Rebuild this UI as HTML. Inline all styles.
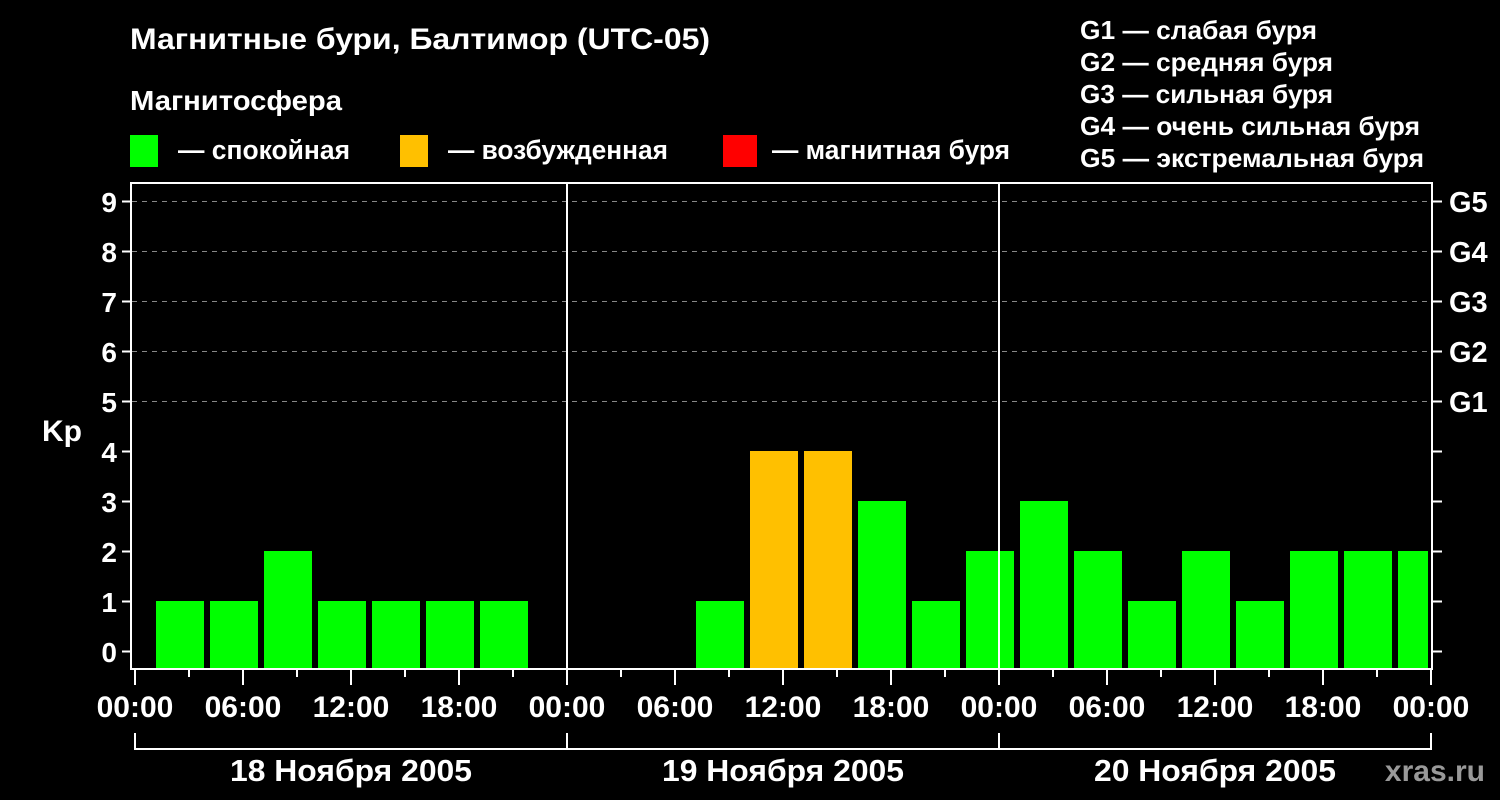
<!DOCTYPE html>
<html><head><meta charset="utf-8"><style>html,body{margin:0;padding:0;background:#000;width:1500px;height:800px;overflow:hidden}</style></head><body>
<svg width="1500" height="800" xmlns="http://www.w3.org/2000/svg" font-family="Liberation Sans, sans-serif" font-weight="bold" fill="#fff">
<rect width="1500" height="800" fill="#000"/>
<text x="130" y="49" font-size="30" textLength="580" lengthAdjust="spacingAndGlyphs">Магнитные бури, Балтимор (UTC-05)</text>
<text x="130" y="110" font-size="28" textLength="212" lengthAdjust="spacingAndGlyphs">Магнитосфера</text>
<rect x="130" y="135" width="28" height="32" fill="#00ff00"/>
<text x="178" y="159" font-size="27" textLength="172" lengthAdjust="spacingAndGlyphs">— спокойная</text>
<rect x="400" y="135" width="28" height="32" fill="#ffc000"/>
<text x="448" y="159" font-size="27" textLength="220" lengthAdjust="spacingAndGlyphs">— возбужденная</text>
<rect x="723" y="135" width="34" height="32" fill="#ff0000"/>
<text x="772" y="159" font-size="27" textLength="238" lengthAdjust="spacingAndGlyphs">— магнитная буря</text>
<g font-size="26">
<text x="1080" y="39" textLength="237" lengthAdjust="spacingAndGlyphs">G1 — слабая буря</text>
<text x="1080" y="71" textLength="253" lengthAdjust="spacingAndGlyphs">G2 — средняя буря</text>
<text x="1080" y="103" textLength="253" lengthAdjust="spacingAndGlyphs">G3 — сильная буря</text>
<text x="1080" y="135" textLength="340" lengthAdjust="spacingAndGlyphs">G4 — очень сильная буря</text>
<text x="1080" y="167" textLength="344" lengthAdjust="spacingAndGlyphs">G5 — экстремальная буря</text>
</g>
<g stroke="#888" stroke-width="1" stroke-dasharray="5,5">
<line x1="132" y1="201.5" x2="1431" y2="201.5"/>
<line x1="132" y1="251.5" x2="1431" y2="251.5"/>
<line x1="132" y1="301.5" x2="1431" y2="301.5"/>
<line x1="132" y1="351.5" x2="1431" y2="351.5"/>
<line x1="132" y1="401.5" x2="1431" y2="401.5"/>
</g>
<g fill="#00ff00">
<rect x="156" y="601" width="48" height="67"/>
<rect x="210" y="601" width="48" height="67"/>
<rect x="264" y="551" width="48" height="117"/>
<rect x="318" y="601" width="48" height="67"/>
<rect x="372" y="601" width="48" height="67"/>
<rect x="426" y="601" width="48" height="67"/>
<rect x="480" y="601" width="48" height="67"/>
<rect x="696" y="601" width="48" height="67"/>
<rect x="858" y="501" width="48" height="167"/>
<rect x="912" y="601" width="48" height="67"/>
<rect x="966" y="551" width="48" height="117"/>
<rect x="1020" y="501" width="48" height="167"/>
<rect x="1074" y="551" width="48" height="117"/>
<rect x="1128" y="601" width="48" height="67"/>
<rect x="1182" y="551" width="48" height="117"/>
<rect x="1236" y="601" width="48" height="67"/>
<rect x="1290" y="551" width="48" height="117"/>
<rect x="1344" y="551" width="48" height="117"/>
<rect x="1398" y="551" width="30" height="117"/>
</g>
<g fill="#ffc000">
<rect x="750" y="451" width="48" height="217"/>
<rect x="804" y="451" width="48" height="217"/>
</g>
<g stroke="#fff" stroke-width="2" fill="none">
<rect x="131" y="183" width="1301" height="486"/>
<line x1="567" y1="183" x2="567" y2="669"/>
<line x1="999" y1="183" x2="999" y2="669"/>
<path d="M122 201.5H131M122 251.5H131M122 301.5H131M122 351.5H131M122 401.5H131M122 451.5H131M122 501.5H131M122 551.5H131M122 601.5H131M122 651.5H131"/>
<path d="M1432 201.5H1442M1432 251.5H1442M1432 301.5H1442M1432 351.5H1442M1432 401.5H1442M1432 451.5H1442M1432 501.5H1442M1432 551.5H1442M1432 601.5H1442M1432 651.5H1442"/>
<path d="M135 670V685M243 670V685M351 670V685M459 670V685M567 670V685M675 670V685M783 670V685M891 670V685M999 670V685M1107 670V685M1215 670V685M1323 670V685M1431 670V685"/>
<path d="M189 670V677M297 670V677M405 670V677M513 670V677M621 670V677M729 670V677M837 670V677M945 670V677M1053 670V677M1161 670V677M1269 670V677M1377 670V677"/>
<path d="M135 733V749H1431V733M567 733V749M999 733V749"/>
</g>
<g font-size="28" text-anchor="end">
<text x="117" y="212">9</text><text x="117" y="262">8</text><text x="117" y="312">7</text><text x="117" y="362">6</text><text x="117" y="412">5</text><text x="117" y="462">4</text><text x="117" y="512">3</text><text x="117" y="562">2</text><text x="117" y="612">1</text><text x="117" y="662">0</text>
</g>
<text x="42" y="441" font-size="30">Kp</text>
<g font-size="29">
<text x="1449" y="212">G5</text><text x="1449" y="262">G4</text><text x="1449" y="312">G3</text><text x="1449" y="362">G2</text><text x="1449" y="412">G1</text>
</g>
<g font-size="30" text-anchor="middle">
<text x="135" y="717">00:00</text><text x="243" y="717">06:00</text><text x="351" y="717">12:00</text><text x="459" y="717">18:00</text><text x="567" y="717">00:00</text><text x="675" y="717">06:00</text><text x="783" y="717">12:00</text><text x="891" y="717">18:00</text><text x="999" y="717">00:00</text><text x="1107" y="717">06:00</text><text x="1215" y="717">12:00</text><text x="1323" y="717">18:00</text><text x="1431" y="717">00:00</text>
</g>
<g font-size="31" text-anchor="middle">
<text x="351" y="781" textLength="242" lengthAdjust="spacingAndGlyphs">18 Ноября 2005</text><text x="783" y="781" textLength="242" lengthAdjust="spacingAndGlyphs">19 Ноября 2005</text><text x="1215" y="781" textLength="242" lengthAdjust="spacingAndGlyphs">20 Ноября 2005</text>
</g>
<text x="1485" y="781" font-size="30" text-anchor="end" fill="#999">xras.ru</text>
</svg>
</body></html>
